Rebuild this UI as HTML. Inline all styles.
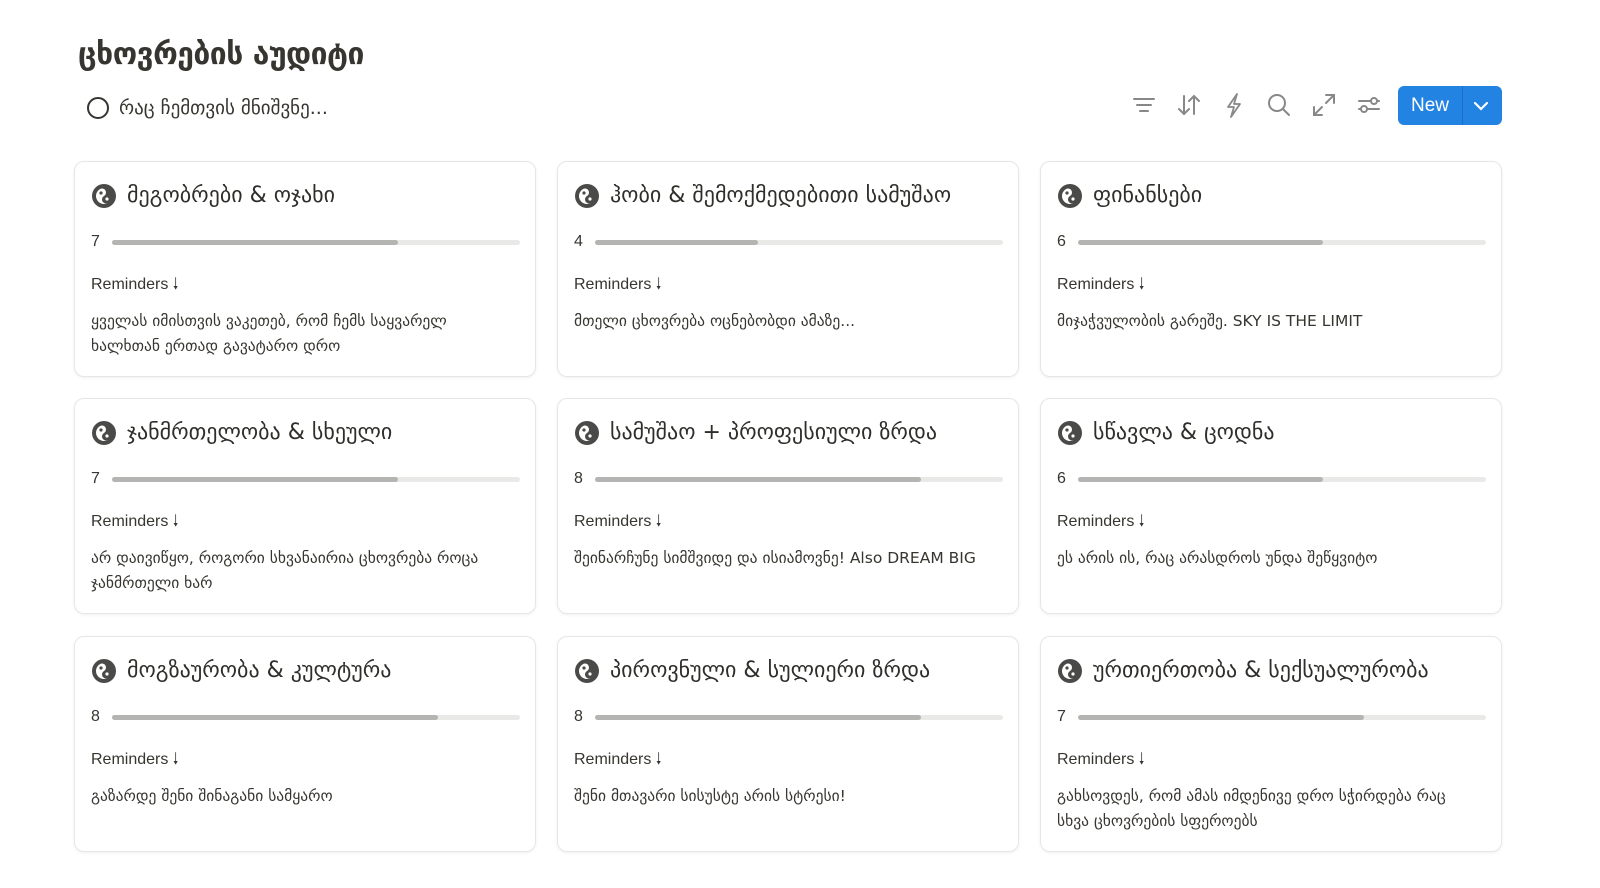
<!DOCTYPE html>
<html><head><meta charset="utf-8"><style>
*{box-sizing:border-box;margin:0;padding:0}
html,body{width:1600px;height:888px}
body{background:#fff;font-family:"Liberation Sans","DejaVu Sans",sans-serif;color:#37352f;position:relative;overflow:hidden}
h1{position:absolute;left:78px;top:37px;font-size:30px;font-weight:bold;color:#37352f;font-family:"DejaVu Sans",sans-serif;letter-spacing:-0.5px}
.view{position:absolute;left:87px;top:97px;font-size:19px;display:flex;align-items:center;gap:10px;font-family:"DejaVu Sans",sans-serif}
.view .c{width:22px;height:22px;border:2.5px solid #37352f;border-radius:50%}
.tools{position:absolute;top:90px;left:1130px;display:flex;gap:0}
.tools svg{width:28px;height:28px;margin-right:17px;margin-top:1px}
.btn{position:absolute;left:1398px;top:86px;width:104px;height:39px;background:#2383e2;border-radius:6px;color:#fff;font-size:19px}
.btn span{position:absolute;left:13px;top:9px}
.btn i{position:absolute;left:64px;top:0;width:1px;height:39px;background:#1a6fc4}
.btn svg{position:absolute;left:74px;top:11px}
.card{position:absolute;width:462px;height:216px;border:1px solid #e6e6e4;border-radius:10px;box-shadow:0 1px 3px rgba(0,0,0,.06)}
.ic{position:absolute;left:16px;top:21px}
.t{position:absolute;left:52px;top:21px;font-size:22px;font-family:"DejaVu Sans",sans-serif;white-space:nowrap;color:#2f2e2a}
.n{position:absolute;left:16px;top:71px;font-size:16px}
.bar{position:absolute;left:37px;top:78px;width:408px;height:5px;background:#e9e9e7;border-radius:3px}
.bar b{display:block;height:5px;background:#b4b4b2;border-radius:3px}
.r{position:absolute;left:16px;top:111px;font-size:16px}
.d{position:absolute;left:16px;top:147px;width:405px;font-size:15.5px;line-height:25px;font-family:"DejaVu Sans",sans-serif}
</style></head><body>
<h1>ცხოვრების აუდიტი</h1>
<div class="view"><div class="c"></div>რაც ჩემთვის მნიშვნე...</div>
<div class="tools">
<svg viewBox="0 0 28 28" fill="none" stroke="#888" stroke-width="2" stroke-linecap="round"><path d="M4 8h20M7 14h14M10 20h8"/></svg>
<svg viewBox="0 0 28 28" fill="none" stroke="#888" stroke-width="2" stroke-linecap="round"><path d="M9 5v18M4 18l5 5 5-5M19 23V5M14 10l5-5 5 5"/></svg>
<svg viewBox="0 0 28 28" fill="none" stroke="#888" stroke-width="1.8" stroke-linejoin="round"><path d="M17 3L8 16h6l-3 10 9-13h-6z"/></svg>
<svg viewBox="0 0 28 28" fill="none" stroke="#888" stroke-width="2" stroke-linecap="round"><circle cx="12" cy="12" r="8"/><path d="M18 18l6 6"/></svg>
<svg viewBox="0 0 28 28" fill="none" stroke="#888" stroke-width="2" stroke-linecap="round"><path d="M16 4h8v8M24 4l-8 8M12 24H4v-8M4 24l8-8"/></svg>
<svg viewBox="0 0 28 28" fill="none" stroke="#888" stroke-width="2" stroke-linecap="round"><path d="M4 10h12M22 10h2M4 18h2M12 18h12"/><circle cx="19" cy="10" r="3"/><circle cx="9" cy="18" r="3"/></svg>
</div>
<div class="btn"><span>New</span><i></i><svg width="18" height="18" viewBox="0 0 18 18" fill="none" stroke="#fff" stroke-width="2.2" stroke-linecap="round"><path d="M3 6l6 6 6-6"/></svg></div>
<div id="g"></div>
<script>
var data=[
["მეგობრები & ოჯახი",7,"ყველას იმისთვის ვაკეთებ, რომ ჩემს საყვარელ ხალხთან ერთად გავატარო დრო"],
["ჰობი & შემოქმედებითი სამუშაო",4,"მთელი ცხოვრება ოცნებობდი ამაზე..."],
["ფინანსები",6,"მიჯაჭვულობის გარეშე. SKY IS THE LIMIT"],
["ჯანმრთელობა & სხეული",7,"არ დაივიწყო, როგორი სხვანაირია ცხოვრება როცა ჯანმრთელი ხარ"],
["სამუშაო + პროფესიული ზრდა",8,"შეინარჩუნე სიმშვიდე და ისიამოვნე! Also DREAM BIG"],
["სწავლა & ცოდნა",6,"ეს არის ის, რაც არასდროს უნდა შეწყვიტო"],
["მოგზაურობა & კულტურა",8,"გაზარდე შენი შინაგანი სამყარო"],
["პიროვნული & სულიერი ზრდა",8,"შენი მთავარი სისუსტე არის სტრესი!"],
["ურთიერთობა & სექსუალურობა",7,"გახსოვდეს, რომ ამას იმდენივე დრო სჭირდება რაც სხვა ცხოვრების სფეროებს"]];
var xs=[74,557,1040],ys=[161,398,636],h="";
var icon='<svg width="26" height="26" viewBox="0 0 26 26"><circle cx="13" cy="13" r="12" fill="#4a4a48"/><path d="M13 5a4 4 0 0 1 0 8a4 4 0 0 0 0 8a8 8 0 0 1 0-16z" fill="#fff" transform="rotate(-30 13 13)"/><circle cx="10" cy="10" r="1.6" fill="#4a4a48"/><circle cx="16" cy="16" r="1.6" fill="#fff"/></svg>';
data.forEach(function(d,i){
h+='<div class="card" style="left:'+xs[i%3]+'px;top:'+ys[Math.floor(i/3)]+'px"><div class="ic">'+icon+'</div><div class="t">'+d[0]+'</div><div class="n">'+d[1]+'</div><div class="bar"><b style="width:'+(d[1]*40.8)+'px"></b></div><div class="r">Reminders &#129043;</div><div class="d">'+d[2]+'</div></div>';});
document.getElementById('g').innerHTML=h;
</script>
</body></html>
